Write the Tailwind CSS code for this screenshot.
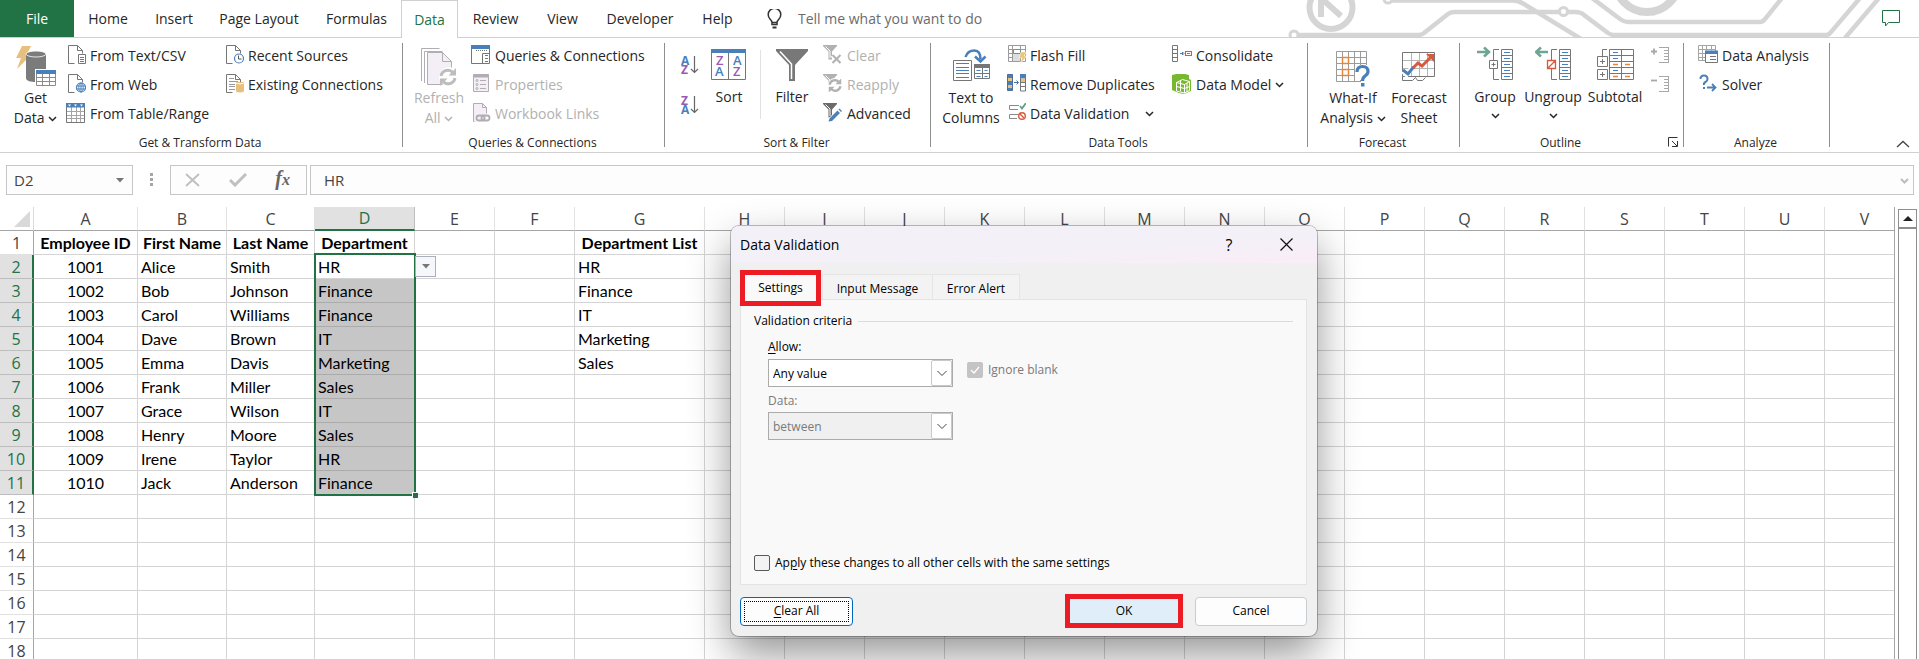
<!DOCTYPE html>
<html lang="en">
<head>
    <meta charset="UTF-8">
    <meta name="viewport" content="width=device-width, initial-scale=1.0">
    <title>Employees - Data Validation</title>
    <script src="https://cdn.jsdelivr.net/npm/@tailwindcss/browser@4"></script>
</head>
<body class="relative h-screen flex flex-col overflow-hidden bg-white font-['Open_Sans',sans-serif] text-sm text-[#262626]">

    <!-- Shared icon pieces -->
    <svg class="hidden">
        <symbol id="chevron" viewBox="0 0 9 6"><path d="M1 1l3.500 3.500L8 1" fill="none" stroke="currentColor" stroke-width="1.500"/></symbol>
        <symbol id="page" viewBox="0 0 20 21"><path d="M8.500 18.500h-6v-18h9l5 5v3M11.500.500v5h5" fill="none" stroke="#767676"/></symbol>
        <symbol id="funnel" viewBox="0 0 20 21"><path d="M0 0h14v1L9 6.500v8H5.500v-8L0 1z" fill="currentColor"/><path d="M2.500 1.500l4.500 4.500v7" fill="none" stroke="#fff"/></symbol>
        <symbol id="cycle" viewBox="0 0 18 18"><path d="M2 8a7 7 0 0 1 12-3.500M16 10a7 7 0 0 1-12 3.500" fill="none" stroke="currentColor" stroke-width="3"/><path d="M17 0v7.500h-7.500zM1 18v-7.500h7.500z" fill="currentColor"/></symbol>
    </svg>

    <!-- Tabs -->
    <header class="relative flex h-[38px] shrink-0 border-b border-[#d2d0ce]">
        <svg class="absolute right-0 top-0" width="639" height="37" viewBox="1280 0 639 37" fill="none" stroke="#d5d5d5" stroke-width="4.500">
            <circle cx="1331" cy="7.500" r="21.500" stroke-width="6"/>
            <path d="M1321 17V-2M1321 -2l20 18" stroke-width="6"/>
            <circle cx="1294" cy="35" r="4" stroke-width="3"/>
            <path d="M1298 35h120q4 0 6-2l24-19q3-2 6-2h105M1567 12h8q6 0 9 3l24 18q3 2 6 2h212q3 0 5-3l29-34"/>
            <circle cx="1563.500" cy="11.500" r="4" stroke-width="3"/>
            <circle cx="1388" cy="-1" r="4" stroke-width="3"/>
            <path d="M1392 .500h121q5 0 10 3l59 36M1592-2l28 21q4 3 8 3h132q3 0 5-3l17-21M1845 38l34-40"/>
            <circle cx="1647" cy="-20" r="32" stroke-width="8"/>
        </svg>
        <button class="h-[37px] w-[74px] bg-[#217346] text-white">File</button>
        <button class="w-[68px]">Home</button>
        <button class="w-[64px]">Insert</button>
        <button class="w-[106px]">Page Layout</button>
        <button class="w-[89px]">Formulas</button>
        <button class="-mb-px w-[57px] border border-b-0 border-[#d2d0ce] bg-white text-[#217346]">Data</button>
        <button class="w-[75px]">Review</button>
        <button class="w-[59px]">View</button>
        <button class="w-[96px]">Developer</button>
        <button class="w-[59px]">Help</button>
        <label class="ml-5 flex items-center gap-4">
            <svg width="15" height="20" viewBox="0 0 15 20" fill="none" stroke="#333" stroke-width="1.500"><path d="M5 15.500v-2q0-1.500-2-3.500a6.300 6.300 0 1 1 9 0q-2 2-2 3.500v2zM5 13.500h5"/><path d="M5.500 18.500h4" stroke-width="2"/></svg>
            <input class="w-[240px] outline-none placeholder:text-[#6b6b6b]" placeholder="Tell me what you want to do">
        </label>
        <button class="relative ml-auto mr-[19px]" aria-label="Comments">
            <svg width="18" height="17" viewBox="0 0 18 17" fill="#fff" stroke="#217346"><path d="M.500.500h17v12h-11L3.500 16v-3.500h-3z"/></svg>
        </button>
    </header>

    <!-- Ribbon -->
    <div class="relative flex shrink-0 border-b border-[#d2d0ce]">
        <section class="w-[402px] pt-[3px]">
            <div class="flex h-[87px] pl-[9px]">
                <button class="w-[53px] leading-5">
                    <svg class="mx-auto block" width="44" height="46" viewBox="0 0 44 46">
                        <path d="M8 4h9l-4 8h5L3 27l4-11H2z" fill="#e8bf7d"/>
                        <path d="M12 12v24c0 3 5 4 10 4h2V28h8V12z" fill="#7b7b7b"/>
                        <ellipse cx="22" cy="12" rx="10" ry="3" fill="#7b7b7b" stroke="#fff" stroke-width=".800"/>
                        <path d="M21 27h22v17H21z" fill="#fff"/><path d="M22.500 32v11.500h19V32M22.500 35.500h19M22.500 39.500h19M28.500 32v12M35.500 32v12" fill="none" stroke="#8a8a8a"/>
                        <path d="M22 28h20v4H22z" fill="#4a80ba"/>
                    </svg>
                    Get<br>Data <svg class="inline" width="9" height="6"><use href="#chevron"/></svg>
                </button>
                <div class="ml-1 w-[158px] leading-[29px]">
                    <button class="flex items-center gap-1 whitespace-nowrap">
                        <svg width="20" height="21" viewBox="0 0 20 21" fill="none" stroke="#767676"><use href="#page"/><path d="M12.500 9.500h7v9h-7zM14 12.500h4M14 14.500h4M14 16.500h4"/></svg>
                        From Text/CSV
                    </button>
                    <button class="flex items-center gap-1 whitespace-nowrap">
                        <svg width="20" height="21" viewBox="0 0 20 21" fill="none" stroke="#4a80ba"><use href="#page"/><circle cx="15" cy="13.500" r="4.500" fill="#fff" stroke-width="1.200"/><path d="M15 9v9M10.500 12h9M10.500 15h9"/><ellipse cx="15" cy="13.500" rx="2.200" ry="4.500"/></svg>
                        From Web
                    </button>
                    <button class="flex items-center gap-1 whitespace-nowrap">
                        <svg width="20" height="21" viewBox="0 0 20 21" fill="none" stroke="#767676"><path d="M5.500 4v15M10.500 4v15M14.500 4v15M1 8.500h18M1 12.500h18M1 15.500h18" stroke="#a5a5a5"/><path d="M.500 4v15.500h18V4"/><path d="M0 0h19v4.500H0z" fill="#4a80ba" stroke="none"/><path d="M2 1.500h3l-1.500 2zM8 1.500h3l-1.500 2zM14 1.500h3l-1.500 2z" fill="#fff" stroke="none"/></svg>
                        From Table/Range
                    </button>
                </div>
                <div class="leading-[29px]">
                    <button class="flex items-center gap-1 whitespace-nowrap">
                        <svg width="20" height="21" viewBox="0 0 20 21" fill="none"><use href="#page"/><circle cx="15" cy="13.500" r="4.500" fill="#fff" stroke="#4a80ba" stroke-width="1.200"/><path d="M14.500 10.500v3.500h3" stroke="#555"/></svg>
                        Recent Sources
                    </button>
                    <button class="flex items-center gap-1 whitespace-nowrap">
                        <svg width="20" height="21" viewBox="0 0 20 21" fill="none"><use href="#page"/><path d="M5 4.500h5M5 7.500h9M5 10.500h6M5 12.500h6M5 15.500h6" stroke="#999"/><path d="M12 8v9.500q4 2 8 0V8z" fill="#e8bf7d"/><path d="M12 9q4 2 8 0" stroke="#fff"/></svg>
                        Existing Connections
                    </button>
                </div>
            </div>
            <h2 class="pt-[5px] pr-[2px] text-center text-xs leading-[19px]">Get &amp; Transform Data</h2>
        </section>
        <div class="my-[5px] w-px bg-[#8e8e8e]"></div>

        <section class="w-[261px] pt-[3px]">
            <div class="flex h-[87px] pl-[6px] text-[#b1b1b1]">
                <button class="w-[60px] leading-5" disabled>
                    <svg class="mx-auto block" width="36" height="46" viewBox="0 0 36 46" fill="none" stroke="#b1adb2">
                        <path d="M.500 39V6.500h18M3.500 41V9.500h18"/><path d="M6.500 42.500v-32h15l9 9v23z" fill="#f4eff6"/><path d="M21.500 10.500v9h9"/>
                        <circle cx="28" cy="35" r="10" fill="#fff" stroke="none"/><svg x="18" y="26" width="18" height="18" stroke="none" class="text-[#bdbdbd]"><use href="#cycle"/></svg>
                    </svg>
                    Refresh<br>All <svg class="inline" width="9" height="6"><use href="#chevron"/></svg>
                </button>
                <div class="ml-[2px] leading-[29px]">
                    <button class="flex items-center gap-1 whitespace-nowrap text-[#262626]">
                        <svg width="20" height="21" viewBox="0 0 20 21" fill="none" stroke="#767676"><path d="M.500 4v14.500h18V4M11.500 18V8.500h7M14 10.500h3M14 13.500h3M14 16.500h3"/><path d="M5 5.500h12" stroke-dasharray="1 1"/><path d="M0 0h19v4H0z" fill="#4a80ba" stroke="none"/></svg>
                        Queries &amp; Connections
                    </button>
                    <button class="flex items-center gap-1 whitespace-nowrap" disabled>
                        <svg width="20" height="21" viewBox="0 0 20 21" fill="none" stroke="#b1adb2"><path d="M2.500.500h15v17h-15z" fill="#f4eff6"/><path d="M2 2h16" stroke-width="3"/><path d="M9 6.500h6M9 10.500h6M9 14.500h6"/><circle cx="6" cy="6.500" r="1"/><circle cx="6" cy="10.500" r="1"/><circle cx="6" cy="14.500" r="1"/></svg>
                        Properties
                    </button>
                    <button class="flex items-center gap-1 whitespace-nowrap" disabled>
                        <svg width="20" height="21" viewBox="0 0 20 21" fill="none" stroke="#b1adb2"><path d="M2.500 18.500v-18h9l4 4V18z" fill="#f4eff6" stroke="none"/><path d="M3.500 18.500h-1v-18h9l4 4v6M11.500.500v4h4"/><rect x="5.500" y="12.500" width="8" height="5" rx="2.500" stroke-width="1.800"/><rect x="10.500" y="12.500" width="8" height="5" rx="2.500" stroke-width="1.800"/></svg>
                        Workbook Links
                    </button>
                </div>
            </div>
            <h2 class="pt-[5px] pr-[2px] text-center text-xs leading-[19px]">Queries &amp; Connections</h2>
        </section>
        <div class="my-[5px] w-px bg-[#8e8e8e]"></div>

        <section class="w-[265px] pt-[3px]">
            <div class="flex h-[87px] pl-[16px]">
                <div class="flex w-[20px] flex-col gap-[18px] pt-[13px]">
                    <button aria-label="Sort A to Z">
                        <svg width="18" height="22" viewBox="0 0 18 22" class="overflow-visible font-['Open_Sans'] text-[12px] font-bold"><text y="11" fill="#4a80ba">A</text><text y="20" fill="#9a59b5">Z</text><path d="M13.500 2v16M10 15l3.500 3.500L17 15" fill="none" stroke="#666" stroke-width="1.200"/></svg>
                    </button>
                    <button aria-label="Sort Z to A">
                        <svg width="18" height="22" viewBox="0 0 18 22" class="overflow-visible font-['Open_Sans'] text-[12px] font-bold"><text y="11" fill="#9a59b5">Z</text><text y="20" fill="#4a80ba">A</text><path d="M13.500 2v16M10 15l3.500 3.500L17 15" fill="none" stroke="#666" stroke-width="1.200"/></svg>
                    </button>
                </div>
                <button class="ml-[8px] flex w-[40px] flex-col items-center leading-5">
                    <svg width="36" height="46" viewBox="0 0 36 46" class="overflow-visible font-['Open_Sans'] text-[13px] font-semibold"><path d="M.500 10v28.500h34V10M17.500 12v26" fill="none" stroke="#767676"/><path d="M0 8h35v4H0z" fill="#4a80ba"/><text x="5" y="24" fill="#9a59b5">Z</text><text x="4" y="35" fill="#4a80ba">A</text><text x="22" y="24" fill="#4a80ba">A</text><text x="22" y="35" fill="#9a59b5">Z</text></svg>
                    Sort
                </button>
                <div class="mt-[9px] ml-[11px] h-[69px] w-px bg-[#e1e1e1]"></div>
                <button class="ml-[6px] flex w-[50px] flex-col items-center leading-5">
                    <svg width="34" height="46" viewBox="0 0 34 46"><path d="M1 8h32v2L20 24v16h-6V24L1 10z" fill="#787878"/><path d="M5 10.500l11.500 12.500v15" fill="none" stroke="#fff" stroke-width="1.500"/></svg>
                    Filter
                </button>
                <div class="ml-[6px] leading-[29px] text-[#b1b1b1]">
                    <button class="flex items-center gap-1 whitespace-nowrap" disabled>
                        <svg width="20" height="21" viewBox="0 0 20 21"><use href="#funnel"/><path d="M9.500 10l8 8M17.500 10l-8 8" stroke="#fff" stroke-width="5"/><path d="M9.500 10l8 8M17.500 10l-8 8" stroke="#b1b1b1" stroke-width="2"/></svg>
                        Clear
                    </button>
                    <button class="flex items-center gap-1 whitespace-nowrap" disabled>
                        <svg width="20" height="21" viewBox="0 0 20 21"><use href="#funnel"/><circle cx="12" cy="11.500" r="7.500" fill="#fff"/><svg x="5" y="4.500" width="14" height="14"><use href="#cycle"/></svg></svg>
                        Reapply
                    </button>
                    <button class="flex items-center gap-1 whitespace-nowrap text-[#262626]">
                        <svg width="20" height="21" viewBox="0 0 20 21"><g class="text-[#6b6b6b]"><use href="#funnel"/></g><path d="M4 20l2-5L16 5l3.500 3.500-10 10z" fill="#fff"/><path d="M5.500 18.500l1-3 8-8 2.500 2.500-8 8zM15.500 6.500l1-1L19 8l-1 1z" fill="#4a80ba"/></svg>
                        Advanced
                    </button>
                </div>
            </div>
            <h2 class="pt-[5px] pr-[2px] text-center text-xs leading-[19px]">Sort &amp; Filter</h2>
        </section>
        <div class="my-[5px] w-px bg-[#8e8e8e]"></div>

        <section class="w-[376px] pt-[3px]">
            <div class="flex h-[87px] pl-[9px]">
                <button class="w-[62px] leading-5">
                    <svg class="mx-auto block" width="37" height="46" viewBox="0 0 37 46" fill="none">
                        <path d="M12.500 15q2-6.500 9-6.500 6 0 6 9" stroke="#4a80ba" stroke-width="2.500"/><path d="M22 14.500l5.500 5 5-5" stroke="#4a80ba" stroke-width="2.500"/>
                        <path d="M.500 18.500h18v20H.500z" stroke="#767676"/><path d="M3 21.500h13M3 25.500h13M3 28.500h13M3 31.500h13M3 35.500h13" stroke="#4a80ba"/>
                        <path d="M21.500 26v10.500h15V22.500M29.500 26v11M22 31.500h14" stroke="#767676"/><path d="M21 22h16v4H21z" fill="#767676"/><path d="M23.500 28.500h4M31.500 28.500h3M23.500 34.500h4M31.500 34.500h3" stroke="#4a80ba"/>
                    </svg>
                    Text to<br>Columns
                </button>
                <div class="ml-[4px] w-[166px] leading-[29px]">
                    <button class="flex items-center gap-1 whitespace-nowrap">
                        <svg width="20" height="21" viewBox="0 0 20 21" fill="none" stroke="#767676"><path d="M2.500.500h17v16h-17zM2.500 4.500h17M2.500 8.500h17M2.500 12.500h17M6.500.500v16M14.500.500v16" stroke="#9b9b9b"/><path d="M7 9h7v7H7z" fill="#ddd" stroke="none"/><path d="M7.500 4.500h7v4h-7z" fill="#fff" stroke="#5f9e86"/><path d="M15 7h5.500L18 11h3l-7 8 2-6h-3z" fill="#eec477" stroke="#fff" stroke-width=".500"/></svg>
                        Flash Fill
                    </button>
                    <button class="flex items-center gap-1 whitespace-nowrap">
                        <svg width="20" height="21" viewBox="0 0 20 21" fill="none" stroke="#4a6f98"><path d="M1.500.500h5v16h-5z" fill="#4a80ba"/><path d="M2 4h4v3H2zM2 11h4v3H2z" fill="#e8bf7d" stroke="none"/><path d="M14.500 1h5v16h-5z" stroke="#767676"/><path d="M15 8.500h4M15 12.500h4" stroke="#767676"/><path d="M14 0h6v4.500h-6z" fill="#4a80ba" stroke="none"/><path d="M15 4.500h4V8h-4z" fill="#e8bf7d" stroke="none"/><path d="M8 8.500h4M10.500 6.500l2 2-2 2"/></svg>
                        Remove Duplicates
                    </button>
                    <button class="flex items-center gap-1 whitespace-nowrap">
                        <svg width="20" height="21" viewBox="0 0 20 21" fill="none"><path d="M12 6.500H3.500v-4H13M11 15.500H3.500v-4H12" stroke="#8a8a8a"/><path d="M14 3l2 2.500L20 0" stroke="#5f9e86" stroke-width="1.800"/><circle cx="16" cy="13" r="3.300" stroke="#d65a3c" stroke-width="1.400"/><path d="M14 11l4 4" stroke="#d65a3c" stroke-width="1.400"/></svg>
                        Data Validation <svg class="ml-3" width="9" height="6"><use href="#chevron"/></svg>
                    </button>
                </div>
                <div class="leading-[29px]">
                    <button class="flex items-center gap-1 whitespace-nowrap">
                        <svg width="20" height="21" viewBox="0 0 20 21" fill="none" stroke="#767676"><path d="M.500.500h5v16h-5zM.500 4.500h5M.500 8.500h5M.500 12.500h5"/><path d="M8 8.500h3M10.500 7v3l1.500-1.500z" stroke="#4a80ba"/><path d="M13.500 6.500h6v4h-6zM15 8.500h3" stroke="#d65a3c" stroke-width="1.200"/></svg>
                        Consolidate
                    </button>
                    <button class="flex items-center gap-1 whitespace-nowrap">
                        <svg width="20" height="21" viewBox="0 0 20 21" fill="none"><path d="M0 1l9-2 8 2v4l2 1v11l-7 3-5-1-7-3z" fill="#77b82e"/><path d="M4.500 8.500l6-3 7 2v9l-5 2.500-8-2zM4.500 8.500l8 2 5-3M12.500 10.500V19M4.500 12.500l8 2 5-2M8.500 7v10M15 9v9" stroke="#fff"/></svg>
                        Data Model <svg width="9" height="6"><use href="#chevron"/></svg>
                    </button>
                </div>
            </div>
            <h2 class="pt-[5px] pr-[2px] text-center text-xs leading-[19px]">Data Tools</h2>
        </section>
        <div class="my-[5px] w-px bg-[#8e8e8e]"></div>

        <section class="w-[151px] pt-[3px]">
            <div class="flex h-[87px] pl-[10px]">
                <button class="w-[70px] leading-5">
                    <svg class="mx-auto block" width="36" height="46" viewBox="0 0 36 46" fill="none">
                        <path d="M1.500 9.500h30v30h-30zM1.500 15.500h30M1.500 21.500h30M1.500 27.500h30M1.500 33.500h30M7.500 9v30M13.500 9v30M19.500 9v30M25.500 9v30" stroke="#9b9b9b"/>
                        <path d="M7.500 15.500h6v6h-6zM7.500 27.500h6v6h-6z" stroke="#e6883a" stroke-width="1.500" fill="#fff"/>
                        <path d="M20 23h15v22h-9v-7h-6z" fill="#fff"/><path d="M22 30q0-5.500 5.500-5.500 5.500 0 5.500 5 0 2.500-3 4.500-2.500 2-2.500 5" stroke="#4a80ba" stroke-width="3.200"/><path d="M26 41h3.500v3.500H26z" fill="#4a80ba"/>
                    </svg>
                    What-If<br><span class="whitespace-nowrap">Analysis <svg class="inline" width="9" height="6"><use href="#chevron"/></svg></span>
                </button>
                <button class="w-[62px] leading-5">
                    <svg class="mx-auto block" width="34" height="46" viewBox="0 0 34 46" fill="none">
                        <path d="M9.500 10v24M17.500 10v24M25.500 10v24M1 18.500h32M1 26.500h32" stroke="#b5b5b5"/><path d="M.500 34.500v-24h32v24zM.500 34.500v4h10l3-3 2 3h5l3-3" stroke="#767676"/>
                        <path d="M1 29l3.500 3.500L10 26" stroke="#fff" stroke-width="5"/><path d="M1 28l5 4 5.500-7" stroke="#4a80ba" stroke-width="3"/><path d="M11 26l5-5 4 3L30 14" stroke="#d65a3c" stroke-width="3"/><path d="M24 12h8v8z" fill="#d65a3c"/>
                    </svg>
                    Forecast<br>Sheet
                </button>
            </div>
            <h2 class="pt-[5px] pr-[2px] text-center text-xs leading-[19px]">Forecast</h2>
        </section>
        <div class="my-[5px] w-px bg-[#8e8e8e]"></div>

        <section class="relative w-[223px] pt-[3px]">
            <div class="flex h-[87px] pl-[6px]">
                <button class="flex w-[58px] flex-col items-center leading-5">
                    <svg width="36" height="46" viewBox="0 0 36 46" fill="none" stroke="#767676">
                        <path d="M0 11h11M7 6.500l5 4.500-5 4.500" stroke="#6fa593" stroke-width="2.500"/><path d="M22 8.500h-5.500v30H22"/><path d="M12.500 19.500h8v8h-8z" fill="#fff"/><path d="M14.500 23.500h4M16.500 21.500v4"/>
                        <path d="M24.500 8.500h11v30h-11zM24.500 14.500h11M24.500 20.500h11M24.500 26.500h11M24.500 32.500h11"/><path d="M27 11.500h6M27 17.500h6M27 23.500h6M27 29.500h6M27 35.500h6" stroke="#4a80ba"/>
                    </svg>
                    Group
                    <svg class="mt-[6px]" width="9" height="6"><use href="#chevron"/></svg>
                </button>
                <button class="flex w-[58px] flex-col items-center leading-5">
                    <svg width="36" height="46" viewBox="0 0 36 46" fill="none" stroke="#767676">
                        <path d="M2 11h11M6 6.500L1 11l5 4.500" stroke="#6fa593" stroke-width="2.500"/><path d="M22 8.500h-5.500v30H22"/><path d="M12.500 19.500h8v8h-8zM13 27l7-7" fill="#fff" stroke="#d65a3c" stroke-width="1.300"/>
                        <path d="M24.500 8.500h11v30h-11zM24.500 14.500h11M24.500 20.500h11M24.500 26.500h11M24.500 32.500h11"/><path d="M27 11.500h6M27 17.500h6M27 23.500h6M27 29.500h6M27 35.500h6" stroke="#4a80ba"/>
                    </svg>
                    Ungroup
                    <svg class="mt-[6px]" width="9" height="6"><use href="#chevron"/></svg>
                </button>
                <button class="flex w-[66px] flex-col items-center leading-5">
                    <svg width="38" height="46" viewBox="0 0 38 46" fill="none" stroke="#767676">
                        <path d="M13.500 8.500h24v30h-24zM25.500 8.500v30M13.500 14.500h24M13.500 20.500h24M13.500 26.500h24M13.500 32.500h24M11 8.500H6.500v8"/><path d="M1.500 15.500h10v10h-10zM1.500 28.500h10v10h-10z"/><path d="M4 20.500h5M6.500 18v5M4 33.500h5M6.500 31v5"/>
                        <path d="M17 11.500h5M17 17.500h5M17 29.500h5" stroke="#4a80ba"/><path d="M17 23.500h5M29 23.500h5M17 35.500h5M29 35.500h5" stroke="#e6883a" stroke-width="1.300"/>
                    </svg>
                    Subtotal
                </button>
                <div class="ml-[3px] flex flex-col gap-[12px] pt-[6px]">
                    <button disabled aria-label="Show Detail"><svg width="19" height="17" viewBox="0 0 19 17" fill="none" stroke="#a8a8a8"><path d="M0 4.500h6M3 1.500v6" stroke-width="1.800"/><path d="M8 .500h9.500M13 3.500h4.500M13 6.500h4.500M13 9.500h4.500M13 12.500h4.500M8 15.500h9.500M17.500 0v16"/></svg></button>
                    <button disabled aria-label="Hide Detail"><svg width="19" height="17" viewBox="0 0 19 17" fill="none" stroke="#a8a8a8"><path d="M0 4.500h6" stroke-width="1.800"/><path d="M8 .500h9.500M13 3.500h4.500M13 6.500h4.500M13 9.500h4.500M13 12.500h4.500M8 15.500h9.500M17.500 0v16"/></svg></button>
                </div>
            </div>
            <h2 class="pt-[5px] pr-[22px] text-center text-xs leading-[19px]">Outline</h2>
            <button class="absolute right-1 bottom-1" aria-label="Outline settings"><svg width="11" height="11" viewBox="0 0 11 11" fill="none" stroke="#333"><path d="M.500 9.500v-9h9M4 4l5 5M9.500 4v5.500H4"/></svg></button>
        </section>
        <div class="my-[5px] w-px bg-[#8e8e8e]"></div>

        <section class="w-[145px] pt-[3px]">
            <div class="h-[87px] pl-[14px] leading-[29px]">
                <button class="flex items-center gap-1 whitespace-nowrap">
                    <svg width="20" height="21" viewBox="0 0 20 21" fill="none" stroke="#a5a5a5"><path d="M.500.500h17v15H.500zM.500 4.500h17M.500 8.500h7M.500 12.500h7M4.500.500v15M8.500.500v5M13.500.500v5"/><path d="M7.500 6.500h12v11h-12z" fill="#fff" stroke="#767676"/><path d="M7 5.500h13V9H7z" fill="#4a80ba" stroke="none"/><path d="M12 11.500h6M12 14.500h6" stroke="#767676"/></svg>
                    Data Analysis
                </button>
                <button class="flex items-center gap-1 whitespace-nowrap">
                    <svg width="20" height="21" viewBox="0 0 20 21" fill="none" stroke="#4a80ba" stroke-width="2"><path d="M2.500 5q0-3.500 3.500-3.500T9.500 5q0 2-2 3T6 11"/><path d="M6 13v2"/><path d="M9 13.500h8M14 10l3.500 3.500L14 17" stroke-width="1.800"/></svg>
                    Solver
                </button>
            </div>
            <h2 class="pt-[5px] pr-[2px] text-center text-xs leading-[19px]">Analyze</h2>
        </section>
        <div class="my-[5px] w-px bg-[#8e8e8e]"></div>
        <button class="ml-auto mr-[9px] self-end pb-1" aria-label="Collapse ribbon"><svg width="14" height="8" viewBox="0 0 14 8"><path d="M1 7l6-5.500L13 7" fill="none" stroke="#444" stroke-width="1.300"/></svg></button>
    </div>

    <!-- Formula bar -->
    <div class="flex shrink-0 py-3 pr-[5px] pl-[6px] text-[15px] text-[#444]">
        <div class="relative h-[30px] w-[127px] border border-[#c6c6c6] bg-[#fdfdfd]">
            <input class="h-full w-full px-[7px] outline-none" value="D2" aria-label="Name box">
            <svg class="absolute top-3 right-2" width="8" height="5"><path d="M0 0h8L4 4.500z" fill="#777"/></svg>
        </div>
        <svg class="mx-[16px]" width="5" height="30" fill="#a6a6a6"><path d="M1 8h3v3H1zM1 13h3v3H1zM1 18h3v3H1z"/></svg>
        <div class="flex h-[30px] w-[137px] items-center justify-between border border-[#c6c6c6] bg-[#fdfdfd] pr-[16px] pl-[14px]">
            <button aria-label="Cancel entry"><svg width="16" height="14" viewBox="0 0 16 14"><path d="M1 1l13 12M14 1L1 13" stroke="#c0c0c0" stroke-width="2"/></svg></button>
            <button aria-label="Enter"><svg width="18" height="14" viewBox="0 0 18 14"><path d="M1 7l5 5L17 1" fill="none" stroke="#c0c0c0" stroke-width="3"/></svg></button>
            <button class="font-['Liberation_Serif',serif] text-xl leading-none font-bold text-[#666] italic" aria-label="Insert function">f<span class="text-base">x</span></button>
        </div>
        <div class="relative ml-[3px] h-[30px] flex-1 border border-[#c6c6c6] bg-[#fdfdfd]">
            <input class="h-full w-full px-[13px] outline-none" value="HR" aria-label="Formula">
            <svg class="absolute top-3 right-1" width="9" height="6"><path d="M1 1l3.500 3.500L8 1" fill="none" stroke="#bcbcbc" stroke-width="2"/></svg>
        </div>
    </div>

    <!-- Worksheet -->
    <div class="flex min-h-0 flex-1 overflow-hidden">
        <div class="min-w-0 flex-1 overflow-hidden border-r border-[#a6a6a6]">
            <table class="w-full min-w-[1905px] table-fixed border-separate border-spacing-0 font-[Lato,sans-serif] text-base leading-[22px] text-black">
                <colgroup id="cols"></colgroup>
                <thead><tr id="headerRow"></tr></thead>
                <tbody id="rows"></tbody>
            </table>
        </div>
        <div class="mr-[2px] ml-[3px] flex w-[19px] flex-col pt-[2px]">
            <button class="flex h-[19px] items-center justify-center border border-[#8e8e8e]" aria-label="Scroll up"><svg width="10" height="5"><path d="M0 5l5-5 5 5z" fill="#222"/></svg></button>
            <div class="flex-1 border-x border-t border-[#8e8e8e]"></div>
        </div>
    </div>

    <!-- Data Validation dialog -->
    <form class="absolute top-[226px] left-[731px] w-[586px] overflow-visible rounded-lg bg-[#f0f0f0] text-xs text-black shadow-[0_0_0_1px_rgba(0,0,0,0.25),0_18px_42px_rgba(0,0,0,0.42)]">
        <div class="flex h-[37px] items-center rounded-t-lg bg-linear-to-br from-[#f3f0f8] from-60% to-[#faedf7] pr-[24px] pl-[9px]">
            <h1 class="flex-1 text-sm">Data Validation</h1>
            <button type="button" class="w-10 text-base" aria-label="Help">?</button>
            <button type="button" class="ml-[31px]" aria-label="Close"><svg width="13" height="13" viewBox="0 0 13 13"><path d="M.500.500l12 12M12.500.500l-12 12" stroke="#111" stroke-width="1.200"/></svg></button>
        </div>
        <div class="pt-[7px] pr-[10px] pl-[9px]">
            <div class="flex h-[29px]">
                <button type="button" class="z-10 h-[36px] w-[81px] border-[5px] border-[#ed1c24] bg-[#f9f9f9]">Settings</button>
                <button type="button" class="mt-1 ml-px w-[111px] border border-b-0 border-[#e5e5e5] bg-[#f3f3f3] pt-[3px]">Input Message</button>
                <button type="button" class="mt-1 w-[87px] border border-b-0 border-l-0 border-[#e5e5e5] bg-[#f3f3f3] pt-[3px]">Error Alert</button>
            </div>
            <div class="flex h-[286px] flex-col border border-[#e3e3e3] bg-[#f9f9f9] px-[13px] py-[11px] leading-5">
                <div class="flex items-center gap-[6px]">Validation criteria<span class="h-px flex-1 bg-[#dcdcdc]"></span></div>
                <div class="mt-[6px] flex flex-col pl-[14px]">
                    <label for="allow"><u class="underline-offset-2">A</u>llow:</label>
                    <div class="mt-[2px] flex items-start">
                        <div class="relative">
                            <select id="allow" class="h-[28px] w-[185px] appearance-none border border-[#ababab] bg-white px-[4px] pt-[2px]"><option>Any value</option></select>
                            <span class="pointer-events-none absolute inset-y-px right-px flex w-[21px] items-center justify-center rounded-xs border border-[#c9c9c9] bg-white"><svg width="10" height="7" viewBox="0 0 10 7"><path d="M.500 1L5 5.500 9.500 1" fill="none" stroke="#444"/></svg></span>
                        </div>
                        <label class="mt-px ml-[14px] flex items-center gap-[5px] text-[#7a7a7a]">
                            <span class="relative flex">
                                <input type="checkbox" class="size-4 appearance-none rounded-xs bg-[#c4c4c4]" checked disabled>
                                <svg class="absolute inset-0" width="16" height="16"><path d="M4 8l3 3 5-6" fill="none" stroke="#fff" stroke-width="1.200"/></svg>
                            </span>
                            Ignore blank
                        </label>
                    </div>
                    <label for="data" class="mt-[4px] text-[#7a7a7a]">Data:</label>
                    <div class="relative mt-px w-[185px]">
                        <select id="data" class="h-[28px] w-full appearance-none border border-[#ababab] bg-[#f0f0f0] px-[4px] pt-[2px] text-[#7a7a7a] opacity-100" disabled><option>between</option></select>
                        <span class="pointer-events-none absolute inset-y-px right-px flex w-[21px] items-center justify-center rounded-xs border border-[#c9c9c9] bg-white"><svg width="10" height="7" viewBox="0 0 10 7"><path d="M.500 1L5 5.500 9.500 1" fill="none" stroke="#444"/></svg></span>
                    </div>
                </div>
                <label class="mt-auto flex items-center gap-[5px]">
                    <input type="checkbox" class="size-4 appearance-none rounded-xs border border-[#5a5a5a] bg-[#f3f3f3]">
                    <span>Ap<u class="underline-offset-2">p</u>ly these changes to all other cells with the same settings</span>
                </label>
            </div>
            <div class="flex h-[51px] items-center pt-px">
                <button type="button" class="h-[29px] w-[113px] rounded-sm border border-[#0067c0] bg-[#fdfdfd] p-[3px]"><span class="flex h-full items-center justify-center border border-dotted border-black"><span><u class="underline-offset-2">C</u>lear All</span></span></button>
                <button type="button" class="ml-auto h-[34px] w-[118px] border-[5px] border-[#ed1c24] bg-[#e0eef9]">OK</button>
                <button type="button" class="ml-[12px] h-[29px] w-[112px] rounded-sm border border-[#c8cdd2] bg-[#fdfdfd]">Cancel</button>
            </div>
        </div>
    </form>

    <script>
        const letters = 'ABCDEFGHIJKLMNOPQRSTUV'.split('');
        const widths = { A: 104, B: 89, C: 88, D: 100, G: 130 };

        const employees = [
            ['1001', 'Alice', 'Smith', 'HR'],
            ['1002', 'Bob', 'Johnson', 'Finance'],
            ['1003', 'Carol', 'Williams', 'Finance'],
            ['1004', 'Dave', 'Brown', 'IT'],
            ['1005', 'Emma', 'Davis', 'Marketing'],
            ['1006', 'Frank', 'Miller', 'Sales'],
            ['1007', 'Grace', 'Wilson', 'IT'],
            ['1008', 'Henry', 'Moore', 'Sales'],
            ['1009', 'Irene', 'Taylor', 'HR'],
            ['1010', 'Jack', 'Anderson', 'Finance']
        ];
        const departments = ['HR', 'Finance', 'IT', 'Marketing', 'Sales'];

        // row number -> { column letter: text }
        const sheet = { 1: { A: 'Employee ID', B: 'First Name', C: 'Last Name', D: 'Department', G: 'Department List' } };
        employees.forEach(([A, B, C, D], i) => { sheet[i + 2] = { A, B, C, D }; });
        departments.forEach((name, i) => { sheet[i + 2].G = name; });

        // The last column takes whatever width is left
        document.getElementById('cols').innerHTML = '<col style="width:34px">' + letters.map(l =>
            l === 'V' ? '<col>' : `<col style="width:${widths[l] || 80}px">`).join('');

        document.getElementById('headerRow').innerHTML =
            `<th class="h-6 border-r border-b border-r-[#dadada] border-b-[#a6a6a6] p-0"><svg class="ml-auto mr-[3px]" width="16" height="16"><path d="M16 0v16H0z" fill="#d9d9d9"/></svg></th>` +
            letters.map(l => l === 'D'
                ? `<th class="h-6 border-r border-b-2 border-r-[#bdbdbd] border-b-[#217346] bg-[#e1e1e1] p-0 font-['Open_Sans',sans-serif] font-normal text-[#217346]">D</th>`
                : `<th class="h-6 border-r border-b border-r-[#e1e1e1] border-b-[#a6a6a6] p-0 font-['Open_Sans',sans-serif] font-normal text-[#444]">${l}</th>`).join('');

        function renderCell(row, letter) {
            const text = (sheet[row] || {})[letter] || '';
            if (row === 1) {
                return `<td class="h-6 border-r border-b border-[#d4d4d4] p-0 text-center font-bold whitespace-nowrap">${text}</td>`;
            }
            if (letter === 'D' && row === 2) {
                return `<td class="relative h-6 border-r border-b border-[#d4d4d4] py-0 pr-0 pl-[3px]">${text}
                    <div class="pointer-events-none absolute -top-0.5 -left-px h-[243px] w-[102px] border-2 border-[#217346]"></div>
                    <div class="absolute top-[237px] left-[97px] size-[6px] border-t border-l border-white bg-[#217346]"></div>
                    <button class="absolute top-px left-[100px] flex h-[21px] w-[21px] items-center justify-center border border-[#aab0bb] bg-[#f5f7fa]" aria-label="Choose department"><svg width="8" height="5"><path d="M0 0h8L4 4.500z" fill="#777"/></svg></button>
                </td>`;
            }
            if (letter === 'D' && row <= 11) {
                return `<td class="h-6 border-r border-b border-[#ababab] bg-[#c6c6c6] py-0 pr-0 pl-[3px]">${text}</td>`;
            }
            if (letter === 'A') {
                return `<td class="h-6 border-r border-b border-[#d4d4d4] p-0 text-center">${text}</td>`;
            }
            return `<td class="h-6 border-r border-b border-[#d4d4d4] py-0 pr-0 pl-[3px]">${text}</td>`;
        }

        let html = '';
        for (let row = 1; row <= 19; row++) {
            const selected = row >= 2 && row <= 11;
            html += '<tr>' + (selected
                ? `<th class="h-6 border-r-2 border-b border-r-[#217346] border-b-[#bdbdbd] bg-[#e1e1e1] p-0 font-['Open_Sans',sans-serif] font-normal text-[#217346]">${row}</th>`
                : `<th class="h-6 border-r border-b border-r-[#a6a6a6] border-b-[#e1e1e1] p-0 font-['Open_Sans',sans-serif] font-normal text-[#444]">${row}</th>`);
            html += letters.map(l => renderCell(row, l)).join('') + '</tr>';
        }
        document.getElementById('rows').innerHTML = html;
    </script>
</body>
</html>
